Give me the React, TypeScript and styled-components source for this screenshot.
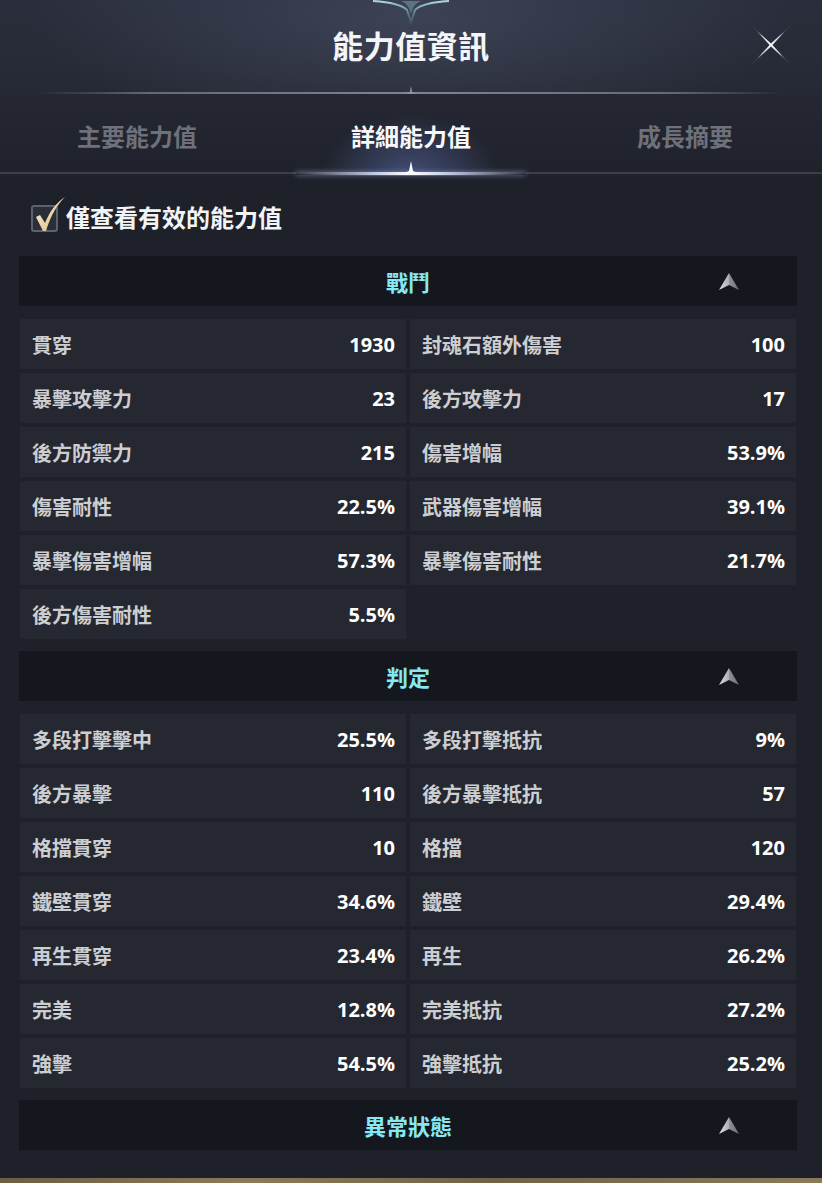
import styled, { createGlobalStyle } from "styled-components";

const GlobalStyle = createGlobalStyle`
  html, body {
    margin: 0;
    padding: 0;
    background: #1e2129;
  }
  * {
    box-sizing: border-box;
  }
`;

type Stat = { label: string; value: string };

const sections: { title: string; stats: Stat[] }[] = [
  {
    title: "戰鬥",
    stats: [
      { label: "貫穿", value: "1930" },
      { label: "封魂石額外傷害", value: "100" },
      { label: "暴擊攻擊力", value: "23" },
      { label: "後方攻擊力", value: "17" },
      { label: "後方防禦力", value: "215" },
      { label: "傷害增幅", value: "53.9%" },
      { label: "傷害耐性", value: "22.5%" },
      { label: "武器傷害增幅", value: "39.1%" },
      { label: "暴擊傷害增幅", value: "57.3%" },
      { label: "暴擊傷害耐性", value: "21.7%" },
      { label: "後方傷害耐性", value: "5.5%" },
    ],
  },
  {
    title: "判定",
    stats: [
      { label: "多段打擊擊中", value: "25.5%" },
      { label: "多段打擊抵抗", value: "9%" },
      { label: "後方暴擊", value: "110" },
      { label: "後方暴擊抵抗", value: "57" },
      { label: "格擋貫穿", value: "10" },
      { label: "格擋", value: "120" },
      { label: "鐵壁貫穿", value: "34.6%" },
      { label: "鐵壁", value: "29.4%" },
      { label: "再生貫穿", value: "23.4%" },
      { label: "再生", value: "26.2%" },
      { label: "完美", value: "12.8%" },
      { label: "完美抵抗", value: "27.2%" },
      { label: "強擊", value: "54.5%" },
      { label: "強擊抵抗", value: "25.2%" },
    ],
  },
  { title: "異常狀態", stats: [] },
];

const tabs = ["主要能力值", "詳細能力值", "成長摘要"];

const Panel = styled.div`
  width: 822px;
  height: 1183px;
  overflow: hidden;
  display: flex;
  flex-direction: column;
  background: #1e2129;
  font-family: "Noto Sans", "Noto Sans CJK TC", sans-serif;
  color: #fff;
`;

const Header = styled.header`
  position: relative;
  height: 94px;
  display: flex;
  align-items: center;
  justify-content: center;
  background: radial-gradient(
      ellipse 380px 120px at 50% 20%,
      rgba(80, 88, 112, 0.5),
      rgba(40, 44, 58, 0) 100%
    ),
    linear-gradient(180deg, #2a2e3c 0%, #262935 100%);
`;

const Title = styled.h1`
  margin: 0 0 6px;
  font-family: "Noto Sans CJK TC", sans-serif;
  font-size: 31px;
  font-weight: 700;
  letter-spacing: 0.5px;
  color: #f4f5f8;
`;

const Ornament = styled.svg`
  position: absolute;
  top: 0;
  left: 50%;
  transform: translateX(-50%);
`;

const CloseButton = styled.button`
  position: absolute;
  right: 30px;
  top: 24px;
  width: 42px;
  height: 42px;
  padding: 0;
  border: none;
  background: transparent;
  cursor: pointer;
`;

const Divider = styled.div`
  position: absolute;
  left: 40px;
  right: 40px;
  bottom: 0;
  height: 2px;
  background: linear-gradient(
    90deg,
    rgba(120, 126, 140, 0) 0%,
    rgba(120, 126, 140, 0.75) 15%,
    rgba(140, 146, 160, 0.85) 50%,
    rgba(120, 126, 140, 0.75) 85%,
    rgba(120, 126, 140, 0) 100%
  );
`;

const DividerStar = styled.svg`
  position: absolute;
  left: 50%;
  bottom: -6px;
  transform: translateX(-50%);
`;

const TabBar = styled.nav`
  position: relative;
  height: 82px;
  display: grid;
  grid-template-columns: repeat(3, 1fr);
  background: linear-gradient(180deg, #252833 0%, #1f222b 100%);
`;

const Tab = styled.div<{ $active?: boolean }>`
  position: relative;
  display: flex;
  align-items: center;
  justify-content: center;
  padding-bottom: 0;
  font-family: "Noto Sans CJK TC", sans-serif;
  font-size: 24px;
  font-weight: 700;
  color: ${(p) => (p.$active ? "#f6f7fa" : "#6e717a")};
  background: ${(p) =>
    p.$active
      ? "radial-gradient(ellipse 90px 60px at 50% 100%, rgba(110, 130, 210, 0.45), rgba(60, 70, 110, 0) 100%)"
      : "none"};
`;

const TabLine = styled.div`
  position: absolute;
  left: 0;
  right: 0;
  bottom: 2px;
  height: 2px;
  background: #3b3e48;
`;

const TabGlow = styled.div`
  position: absolute;
  left: 50%;
  bottom: 1px;
  width: 230px;
  height: 3px;
  transform: translateX(-50%);
  background: linear-gradient(
    90deg,
    rgba(200, 215, 255, 0) 0%,
    rgba(220, 230, 255, 0.85) 35%,
    #ffffff 50%,
    rgba(220, 230, 255, 0.85) 65%,
    rgba(200, 215, 255, 0) 100%
  );
  box-shadow: 0 0 5px rgba(170, 190, 255, 0.6);
`;

const TabPeak = styled.svg`
  position: absolute;
  left: 50%;
  bottom: 3px;
  transform: translateX(-50%);
`;

const Content = styled.main`
  flex: 1;
  padding: 22px 25px 0 19px;
  display: flex;
  flex-direction: column;
`;

const FilterRow = styled.label`
  display: flex;
  align-items: center;
  gap: 8px;
  padding-left: 12px;
  height: 36px;
  margin-bottom: 22px;
  font-family: "Noto Sans CJK TC", sans-serif;
  font-size: 24px;
  font-weight: 700;
  color: #f2f3f5;
`;

const CheckBox = styled.span`
  position: relative;
  width: 27px;
  height: 27px;
  margin-top: 4px;
  border: 2px solid #5c626d;
  border-radius: 3px;
  background: #2a2e37;
`;

const CheckMark = styled.svg`
  position: absolute;
  left: -1px;
  top: -12px;
`;

const SectionHeader = styled.div`
  position: relative;
  height: 50px;
  display: flex;
  align-items: center;
  justify-content: center;
  background: #14171e;
  font-family: "Noto Sans CJK TC", sans-serif;
  font-size: 22px;
  font-weight: 700;
  color: #86e8f2;
`;

const Arrow = styled.svg`
  position: absolute;
  right: 57px;
  top: 16px;
`;

const StatGrid = styled.div`
  display: grid;
  grid-template-columns: 1fr 1fr;
  column-gap: 4px;
  row-gap: 4px;
  padding: 13px 1px 12px 1px;
`;

const StatCell = styled.div`
  height: 50px;
  display: flex;
  align-items: center;
  justify-content: space-between;
  padding: 0 11px 0 12px;
  background: #252830;
`;

const StatLabel = styled.span`
  font-family: "Noto Sans CJK TC", sans-serif;
  font-size: 20px;
  font-weight: 700;
  color: #cdced2;
`;

const StatValue = styled.span`
  font-family: "Open Sans", "Noto Sans", sans-serif;
  font-size: 20px;
  font-weight: 700;
  color: #ffffff;
`;

const GroundStrip = styled.div`
  height: 5px;
  background: linear-gradient(90deg, #6d5d42, #8b7a58 30%, #6f6247 60%, #8a7a5a);
`;

const CollapseArrow = () => (
  <Arrow width="22" height="20" viewBox="0 0 22 20">
    <defs>
      <linearGradient id="arrowL" x1="0" y1="0" x2="1" y2="0">
        <stop offset="0" stopColor="#dcdce0" />
        <stop offset="1" stopColor="#aeb0b6" />
      </linearGradient>
      <linearGradient id="arrowR" x1="0" y1="0" x2="1" y2="0">
        <stop offset="0" stopColor="#909298" />
        <stop offset="1" stopColor="#6c6e74" />
      </linearGradient>
    </defs>
    <path d="M11 1 L1 18 L11 13 Z" fill="url(#arrowL)" />
    <path d="M11 1 L21 18 L11 13 Z" fill="url(#arrowR)" />
  </Arrow>
);

export default function App() {
  return (
    <>
      <GlobalStyle />
      <Panel>
        <Header>
          <Ornament width="80" height="24" viewBox="0 0 80 24">
            <defs>
              <linearGradient id="orn" x1="0" y1="0" x2="0" y2="1">
                <stop offset="0" stopColor="#a8dde0" />
                <stop offset="1" stopColor="#5f8890" stopOpacity="0.3" />
              </linearGradient>
            </defs>
            <path
              d="M2 1 C18 2 30 4 36 10 L40 22 L44 10 C50 4 62 2 78 1"
              fill="none"
              stroke="url(#orn)"
              strokeWidth="2"
            />
            <path d="M30 1 C35 3 38 6 40 14 C42 6 45 3 50 1 Z" fill="#6d9aa0" opacity="0.6" />
          </Ornament>
          <Title>能力值資訊</Title>
          <CloseButton aria-label="close">
            <svg width="42" height="42" viewBox="0 0 42 42">
              <defs>
                <radialGradient id="xg" cx="0.5" cy="0.5" r="0.5">
                  <stop offset="0" stopColor="#ffffff" />
                  <stop offset="0.6" stopColor="#c9ccd6" />
                  <stop offset="1" stopColor="#8f94a2" stopOpacity="0.25" />
                </radialGradient>
              </defs>
              <path d="M1 1 L21 19.6 L41 1 L22.4 21 L41 41 L21 22.4 L1 41 L19.6 21 Z" fill="url(#xg)" />
            </svg>
          </CloseButton>
          <Divider />
          <DividerStar width="12" height="14" viewBox="0 0 12 14">
            <path d="M6 0 L7.2 6 L12 7 L7.2 8 L6 14 L4.8 8 L0 7 L4.8 6 Z" fill="#8d93a3" />
          </DividerStar>
        </Header>

        <TabBar>
          {tabs.map((t, i) => (
            <Tab key={t} $active={i === 1}>
              {t}
            </Tab>
          ))}
          <TabLine />
          <TabGlow />
          <TabPeak width="14" height="12" viewBox="0 0 14 12">
            <path d="M7 0 L9 10 L14 12 L0 12 L5 10 Z" fill="#ffffff" />
          </TabPeak>
        </TabBar>

        <Content>
          <FilterRow>
            <CheckBox>
              <CheckMark width="34" height="40" viewBox="0 0 34 40">
                <defs>
                  <linearGradient id="chk" x1="0" y1="0" x2="1" y2="1">
                    <stop offset="0" stopColor="#fff4d8" />
                    <stop offset="1" stopColor="#d8b479" />
                  </linearGradient>
                </defs>
                <path
                  d="M4 22 L8 20 L13 28 C18 16 24 8 33 2 C25 10 19 20 14 36 L11 36 Z"
                  fill="url(#chk)"
                />
              </CheckMark>
            </CheckBox>
            僅查看有效的能力值
          </FilterRow>

          {sections.map((s) => (
            <div key={s.title}>
              <SectionHeader>
                {s.title}
                <CollapseArrow />
              </SectionHeader>
              {s.stats.length > 0 && (
                <StatGrid>
                  {s.stats.map((st) => (
                    <StatCell key={st.label}>
                      <StatLabel>{st.label}</StatLabel>
                      <StatValue>{st.value}</StatValue>
                    </StatCell>
                  ))}
                </StatGrid>
              )}
            </div>
          ))}
        </Content>
        <GroundStrip />
      </Panel>
    </>
  );
}
